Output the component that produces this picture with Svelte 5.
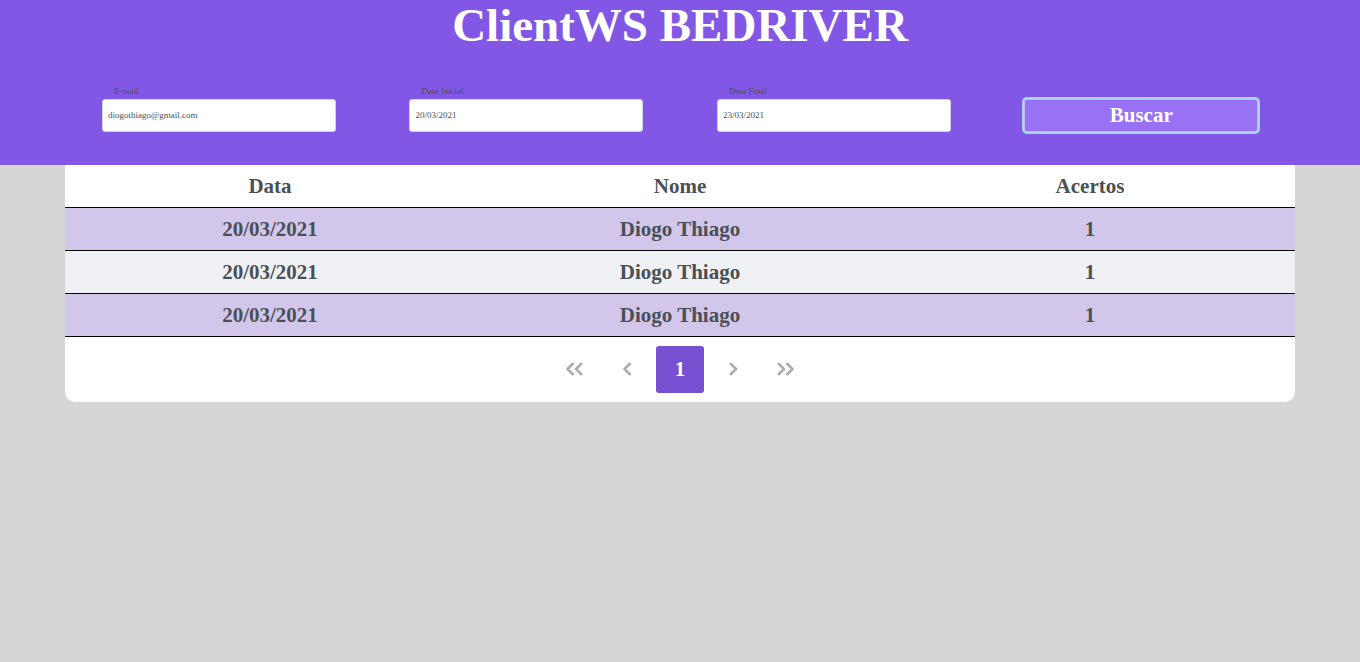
<script>
  let email = $state('diogothiago@gmail.com');
  let start = $state('20/03/2021');
  let end = $state('23/03/2021');
  const rows = [
    { data: '20/03/2021', nome: 'Diogo Thiago', acertos: 1 },
    { data: '20/03/2021', nome: 'Diogo Thiago', acertos: 1 },
    { data: '20/03/2021', nome: 'Diogo Thiago', acertos: 1 },
  ];
</script>

<header>
  <h1>ClientWS BEDRIVER</h1>
  <form onsubmit={(e) => e.preventDefault()}>
    <div class="field">
      <label for="email">E-mail</label>
      <input id="email" type="text" bind:value={email} />
    </div>
    <div class="field">
      <label for="start">Data Inicial</label>
      <input id="start" type="text" bind:value={start} />
    </div>
    <div class="field">
      <label for="end">Data Final</label>
      <input id="end" type="text" bind:value={end} />
    </div>
    <div class="field">
      <button class="search" type="submit">Buscar</button>
    </div>
  </form>
</header>

<main>
  <table>
    <thead>
      <tr><th>Data</th><th>Nome</th><th>Acertos</th></tr>
    </thead>
    <tbody>
      {#each rows as row}
        <tr><td>{row.data}</td><td>{row.nome}</td><td>{row.acertos}</td></tr>
      {/each}
    </tbody>
  </table>
  <nav aria-label="Paginação">
    <button class="page" aria-label="Primeira página">
      <svg viewBox="0 0 18 16"><path d="M7.8 1.8 2.5 7l5.3 5.2M16.3 1.8 11 7l5.3 5.2" /></svg>
    </button>
    <button class="page" aria-label="Página anterior">
      <svg viewBox="0 0 18 16"><path d="M11.8 1.8 6.5 7l5.3 5.2" /></svg>
    </button>
    <button class="page current" aria-current="page">1</button>
    <button class="page" aria-label="Próxima página">
      <svg viewBox="0 0 18 16"><path d="M6.7 1.8 12 7l-5.3 5.2" /></svg>
    </button>
    <button class="page" aria-label="Última página">
      <svg viewBox="0 0 18 16"><path d="M1.7 1.8 7 7l-5.3 5.2M10.2 1.8 15.5 7l-5.3 5.2" /></svg>
    </button>
  </nav>
</main>

<style>
  :global(body) {
    background: #d6d6d6;
    font-family: 'Liberation Serif', 'Times New Roman', serif;
    color: #495057;
  }
  header {
    box-sizing: border-box;
    padding: 0 65px 33px;
    background: #8257e5;
  }
  h1 {
    margin: 0;
    color: #fff;
    font-size: 47px;
    line-height: 50px;
    text-align: center;
  }
  form {
    display: grid;
    grid-template-columns: repeat(4, 1fr);
    align-items: end;
    padding-top: 33px;
  }
  .field {
    display: flex;
    flex-direction: column;
    padding: 0 12%;
  }
  label {
    padding-left: 12px;
    font-size: 9px;
    line-height: 16px;
  }
  input,
  .search {
    box-sizing: border-box;
    width: 100%;
    height: 33px;
    margin: 0;
    border: 1px solid #ced4da;
    border-radius: 3px;
    font-family: inherit;
  }
  input {
    padding: 0 5px 1px;
    background: #fff;
    color: #495057;
    font-size: 9px;
  }
  .search {
    padding: 0;
    border-color: #c5b8fa;
    background: #9871f5;
    box-shadow: 0 0 0 2px #a6d5fa;
    color: #fff;
    font-size: 21px;
    font-weight: 700;
  }
  main {
    margin: 0 65px;
    overflow: hidden;
    border-radius: 0 0 10px 10px;
    background: #fff;
  }
  table {
    width: 100%;
    border-collapse: collapse;
    table-layout: fixed;
  }
  th,
  td {
    height: 42px;
    padding: 0;
    border-bottom: 1px solid #000;
    font-size: 21px;
    font-weight: 700;
    line-height: 24px;
    text-align: center;
  }
  tbody tr {
    background: #eff1f5;
  }
  tbody tr:nth-child(odd) {
    background: #d2c6ea;
  }
  nav {
    display: flex;
    align-items: center;
    justify-content: center;
    gap: 5px;
    padding: 9px 0;
  }
  .page {
    display: flex;
    align-items: center;
    justify-content: center;
    width: 48px;
    height: 47px;
    padding: 0;
    border: 0;
    border-radius: 3px;
    background: transparent;
    color: #a9adb1;
    font-family: inherit;
    font-size: 21px;
    font-weight: 700;
  }
  .current {
    background: #774fd1;
    color: #fff;
  }
  svg {
    width: 18px;
    height: 16px;
    fill: none;
    stroke: currentColor;
    stroke-width: 2.6;
    stroke-linecap: round;
    stroke-linejoin: round;
  }
</style>
